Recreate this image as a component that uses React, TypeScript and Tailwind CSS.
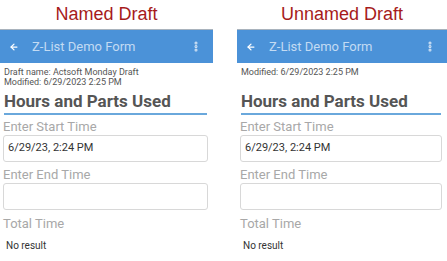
import { ArrowLeft, EllipsisVertical } from 'lucide-react';

interface DraftPanelProps {
  caption: string;
  draftName?: string;
  modified: string;
  className?: string;
}

function DraftPanel({ caption, draftName, modified, className }: DraftPanelProps) {
  return (
    <div className={`flex flex-col ${className ?? ''}`}>
      <div className="h-[29px] flex items-center justify-center text-[18px] text-[#a61b1b] font-['Liberation_Sans',Arial,sans-serif]">
        {caption}
      </div>
      <div className="h-[34px] bg-[#4b92d8] border-t border-[#a9b3bd] flex items-center pl-[9px] pr-[11px]">
        <ArrowLeft className="w-[10px] h-[10px] text-white" strokeWidth={3} />
        <span className="ml-[13px] text-[13px] text-[#c3dbf3]">Z-List Demo Form</span>
        <EllipsisVertical className="ml-auto w-[12px] h-[15px] text-[#dbe9f7]" strokeWidth={4} />
      </div>
      <div className="h-[28px] pt-[4px] pl-[4px] text-[9px] leading-[10px] text-[#555555]">
        {draftName && <p>Draft name: {draftName}</p>}
        <p>Modified: {modified}</p>
      </div>
      <div className="pl-[4px] pr-[6px]">
        <h2 className="text-[17px] leading-[21px] font-bold text-[#555555] border-b-2 border-[#6aa8dc] pb-[1px]">
          Hours and Parts Used
        </h2>
      </div>
      <div className="pl-[3px] pr-[5px]">
        <p className="mt-[4px] text-[13px] leading-[16px] text-[#a8a8a8]">Enter Start Time</p>
        <div className="h-[27px] border border-[#d8d8d8] rounded-[3px] flex items-center px-[4px] text-[11px] text-[#333333]">
          6/29/23, 2:24 PM
        </div>
        <p className="mt-[5px] text-[13px] leading-[16px] text-[#a8a8a8]">Enter End Time</p>
        <div className="h-[27px] border border-[#d8d8d8] rounded-[3px]" />
        <p className="mt-[6px] text-[13px] leading-[16px] text-[#a8a8a8]">Total Time</p>
        <p className="mt-[8px] pl-[3px] text-[10px] leading-[12px] text-[#333333]">No result</p>
      </div>
    </div>
  );
}

export default function App() {
  return (
    <div className="w-[447px] h-[261px] bg-white flex font-['Roboto',sans-serif] overflow-hidden">
      <DraftPanel
        className="w-[213px]"
        caption="Named Draft"
        draftName="Actsoft Monday Draft"
        modified="6/29/2023 2:25 PM"
      />
      <DraftPanel
        className="w-[210px] ml-[24px]"
        caption="Unnamed Draft"
        modified="6/29/2023 2:25 PM"
      />
    </div>
  );
}
